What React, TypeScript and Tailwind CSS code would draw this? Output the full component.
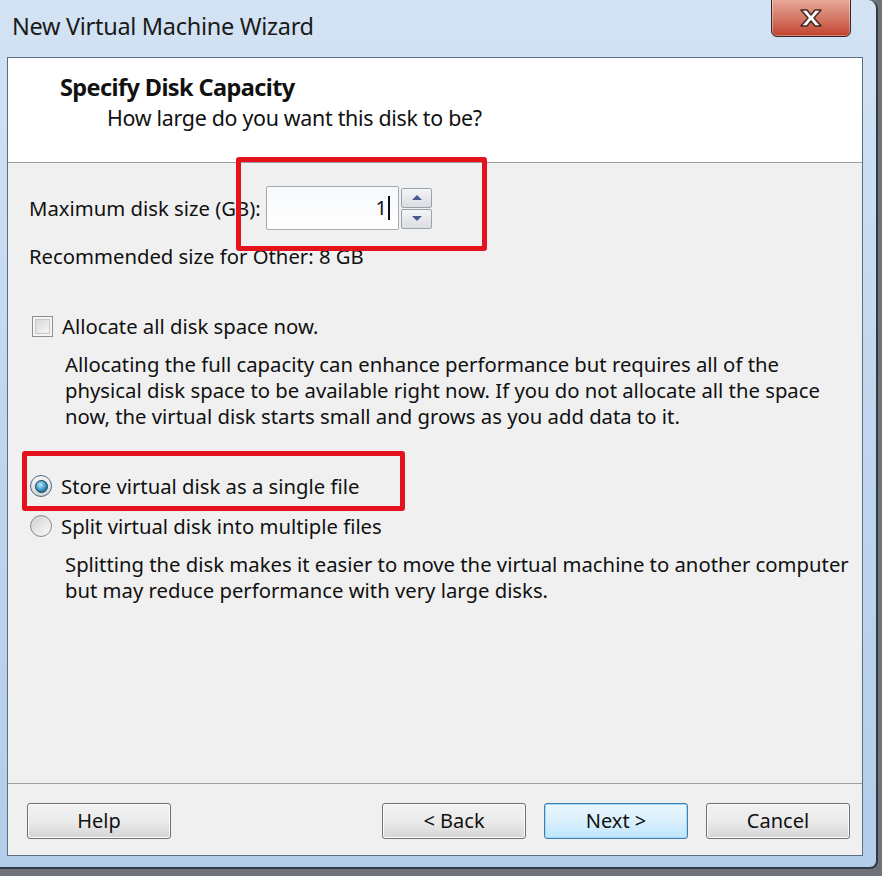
import React from "react";

const font = { fontFamily: '"Noto Sans", "Open Sans", sans-serif' };

function WinButton({ label, focused }: { label: string; focused?: boolean }) {
  return (
    <div
      className={`w-[144px] h-[36px] rounded-[3px] border flex items-center justify-center text-[20px] text-[#111] ${
        focused
          ? "border-[#3c7fb1] bg-gradient-to-b from-[#eaf6fd] via-[#d9f0fc] to-[#bee6fd] shadow-[inset_0_0_0_1px_#a7d9f5]"
          : "border-[#707070] bg-gradient-to-b from-[#f2f2f2] via-[#ebebeb] to-[#d5d5d5] shadow-[inset_0_0_0_1px_#fcfcfc]"
      }`}
    >
      {label}
    </div>
  );
}

function CloseButton() {
  return (
    <div className="absolute right-[25px] top-[-2px] w-[80px] h-[39px] rounded-b-[6px] border border-[#3b2622] bg-gradient-to-b from-[#e9a99b] via-[#d47a68] to-[#c0402c] flex items-center justify-center shadow-[inset_0_0_0_1px_rgba(255,255,255,0.35)]">
      <svg width="28" height="22" viewBox="0 0 28 22">
        <path
          d="M4 3 L10 3 L14 8 L18 3 L24 3 L17 11 L24 19 L18 19 L14 14 L10 19 L4 19 L11 11 Z"
          fill="#ffffff"
          stroke="#4a2a26"
          strokeWidth="1.6"
          strokeLinejoin="round"
        />
      </svg>
    </div>
  );
}

export default function App() {
  return (
    <div className="w-[882px] h-[876px] bg-[#6f7378] overflow-hidden" style={font}>
      <div className="relative w-[878px] h-[869px] rounded-tr-[9px] rounded-br-[8px] border-r-2 border-b-2 border-[#2f3b47] bg-gradient-to-b from-[#d3e3f4] via-[#c0d6ee] to-[#b3cdea] flex flex-col">
        {/* title bar */}
        <div className="h-[57px] flex items-center pl-[12px] pb-[4px]">
          <span className="text-[23.5px] text-[#1a1a1a] tracking-[-0.3px]">New Virtual Machine Wizard</span>
        </div>
        <CloseButton />

        {/* client */}
        <div className="ml-[7px] w-[856px] h-[799px] border border-[#5b6d80] flex flex-col">
          {/* header */}
          <div className="h-[105px] bg-white border-b border-[#a0a0a0] pt-[13px]">
            <div className="pl-[52px] text-[23.5px] font-bold text-[#111] leading-[32px] tracking-[-0.6px]">
              Specify Disk Capacity
            </div>
            <div className="pl-[99px] text-[21.4px] text-[#111] leading-[30px] tracking-[-0.3px]">
              How large do you want this disk to be?
            </div>
          </div>

          {/* body */}
          <div className="flex-1 bg-[#f0f0f0] border-b border-[#a0a0a0] pl-[21px] pr-[8px] pt-[22px] text-[20.3px] text-[#111]">
            <div className="relative flex items-center h-[46px]">
              <span className="w-[237px]">Maximum disk size (GB):</span>
              <div className="w-[133px] h-[44px] border border-[#a5acb5] rounded-[2px] bg-gradient-to-b from-[#f6f8fb] to-[#ffffff] flex items-center justify-end pr-[8px] text-[20px]">
                <span>1</span>
                <span className="w-[2px] h-[24px] bg-[#111] ml-[1px]" />
              </div>
              <div className="ml-[2px] flex flex-col gap-[1px]">
                <div className="w-[31px] h-[20px] border border-[#9aa3ad] rounded-[2px] bg-gradient-to-b from-[#f4f5f6] to-[#dadde1] flex items-center justify-center">
                  <svg width="12" height="7" viewBox="0 0 12 7">
                    <path d="M1 6 L6 1 L11 6 Z" fill="#4a5a8a" />
                  </svg>
                </div>
                <div className="w-[31px] h-[20px] border border-[#9aa3ad] rounded-[2px] bg-gradient-to-b from-[#f4f5f6] to-[#dadde1] flex items-center justify-center">
                  <svg width="12" height="7" viewBox="0 0 12 7">
                    <path d="M1 1 L6 6 L11 1 Z" fill="#4a5a8a" />
                  </svg>
                </div>
              </div>
              <div className="absolute left-[207px] top-[-28px] w-[251px] h-[94px] border-[5px] border-[#e3121c] rounded-[3px]" />
            </div>

            <div className="mt-[12px] leading-[26px]">Recommended size for Other: 8 GB</div>

            <div className="mt-[45px] flex items-center h-[24px]">
              <div className="ml-[3px] w-[21px] h-[21px] border border-[#8e8f8f] p-[2px] bg-[#f4f4f4]">
                <div className="w-full h-full border border-[#c8c8c8] bg-gradient-to-br from-[#d8d8d8] to-[#f6f6f6]" />
              </div>
              <span className="ml-[9px]">Allocate all disk space now.</span>
            </div>
            <div className="mt-[13px] ml-[36px] leading-[26px]">
              Allocating the full capacity can enhance performance but requires all of the
              <br />
              physical disk space to be available right now. If you do not allocate all the space
              <br />
              now, the virtual disk starts small and grows as you add data to it.
            </div>

            <div className="relative mt-[44px] flex items-center h-[26px]">
              <div className="ml-[1px] w-[22px] h-[22px] rounded-full border border-[#4a6a86] bg-gradient-to-b from-[#f6f6f6] to-[#d4d4d4] flex items-center justify-center">
                <div className="w-[13px] h-[13px] rounded-full border border-[#0f3d5a] bg-[radial-gradient(circle_at_40%_35%,#c4ecfa,#3d9cc6_50%,#0b4a6e)]" />
              </div>
              <span className="ml-[9px]">Store virtual disk as a single file</span>
              <div className="absolute left-[-7px] top-[-22px] w-[383px] h-[60px] border-[5px] border-[#e3121c] rounded-[3px]" />
            </div>
            <div className="mt-[14px] flex items-center h-[26px]">
              <div className="ml-[1px] w-[22px] h-[22px] rounded-full border border-[#8a8a8a] bg-gradient-to-br from-[#cdcdcd] via-[#e6e6e6] to-[#fafafa]" />
              <span className="ml-[9px]">Split virtual disk into multiple files</span>
            </div>
            <div className="mt-[12px] ml-[36px] leading-[26px]">
              Splitting the disk makes it easier to move the virtual machine to another computer
              <br />
              but may reduce performance with very large disks.
            </div>
          </div>

          {/* footer */}
          <div className="h-[71px] bg-[#f0f0f0] flex items-center pl-[19px] pr-[12px] pt-[2px]">
            <WinButton label="Help" />
            <div className="flex-1" />
            <div className="flex gap-[18px]">
              <WinButton label="< Back" />
              <WinButton label="Next >" focused />
              <WinButton label="Cancel" />
            </div>
          </div>
        </div>
      </div>
    </div>
  );
}
